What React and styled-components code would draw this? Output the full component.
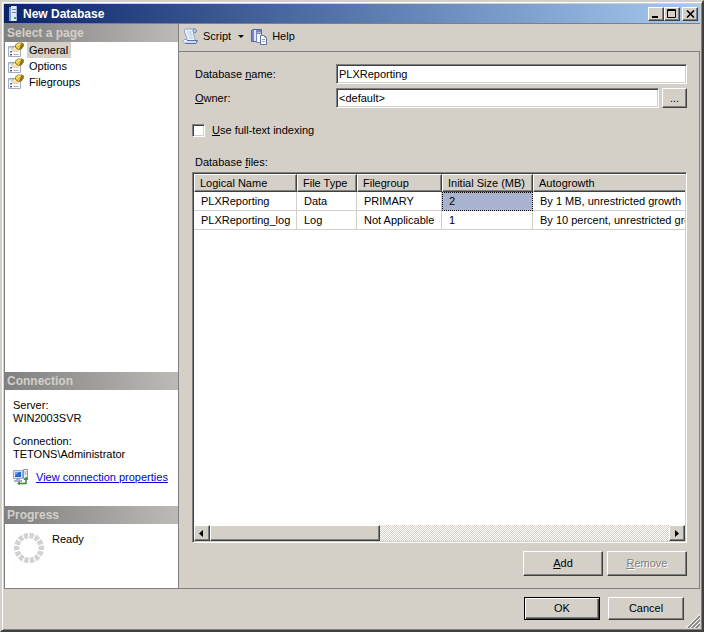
import { useState } from "react";
import styled, { createGlobalStyle } from "styled-components";

const GlobalStyle = createGlobalStyle`
  * {
    box-sizing: border-box;
  }
  body {
    margin: 0;
    background: #d4d0c8;
  }
  body, button, input, table {
    font-family: "Liberation Sans", Arial, sans-serif;
    font-size: 11px;
    line-height: 13px;
    color: #000;
  }
`;

const raised = `
  border: 1px solid;
  border-color: #fff #404040 #404040 #fff;
  box-shadow: inset -1px -1px 0 #808080;
`;

const sunken = `
  border: 1px solid;
  border-color: #808080 #fff #fff #808080;
  box-shadow: inset 1px 1px 0 #404040, inset -1px -1px 0 #d4d0c8;
`;

const Window = styled.div`
  display: flex;
  flex-direction: column;
  min-height: 100vh;
  padding: 2px;
  background: #d4d0c8;
  border: 2px solid;
  border-color: #d4d0c8 #404040 #404040 #d4d0c8;
  box-shadow: inset 1px 1px 0 #fff, inset -1px -1px 0 #808080;
`;

const TitleBar = styled.header`
  display: flex;
  align-items: center;
  height: 19px;
  padding: 0 2px 0 4px;
  background: linear-gradient(to right, #0a246a, #a6caf0);
`;

const Title = styled.h1`
  flex: 1;
  margin: 0 0 0 3px;
  font-size: 12px;
  line-height: 16px;
  color: #fff;
`;

const CaptionButton = styled.button`
  display: flex;
  align-items: center;
  justify-content: center;
  width: 16px;
  height: 14px;
  margin-left: ${(props) => (props.$spaced ? "2px" : "0")};
  padding: 0;
  background: #d4d0c8;
  ${raised}
`;

const Body = styled.div`
  display: flex;
  flex: 1;
  border-top: 1px solid #808080;
`;

const Sidebar = styled.aside`
  display: flex;
  flex-direction: column;
  width: 175px;
  flex-shrink: 0;
  background: #fff;
  border: 1px solid #808080;
  border-top: 0;
`;

const SectionTitle = styled.h2`
  margin: 0;
  padding: 0 2px;
  font-size: 12px;
  line-height: 18px;
  color: #d4d0c8;
  background: linear-gradient(to right, #808080, #bcbab6);
`;

const PageList = styled.ul`
  flex: 1;
  margin: 0;
  padding: 0 3px;
  list-style: none;
`;

const PageItem = styled.li`
  display: flex;
  gap: 3px;
  height: 16px;
`;

const PageButton = styled.button`
  padding: 0 3px 0 2px;
  border: 0;
  line-height: 16px;
  background: ${(props) => (props.$selected ? "#d4d0c8" : "transparent")};
`;

const ConnectionInfo = styled.div`
  padding: 9px 8px 21px;
`;

const Fact = styled.p`
  margin: 0 0 10px;
`;

const LinkRow = styled.div`
  display: flex;
  align-items: center;
  gap: 7px;
  margin-top: -2px;
`;

const PropertiesLink = styled.a`
  color: #0000e0;
  white-space: nowrap;
`;

const ProgressInfo = styled.div`
  display: flex;
  gap: 8px;
  padding: 9px 9px 25px;
`;

const Main = styled.main`
  display: flex;
  flex: 1;
  flex-direction: column;
  min-width: 0;
`;

const Toolbar = styled.div`
  display: flex;
  align-items: center;
  gap: 7px;
  height: 27px;
  padding: 0 3px 2px;
`;

const ToolButton = styled.button`
  display: flex;
  align-items: center;
  gap: 4px;
  padding: 0;
  border: 0;
  background: transparent;
`;

const Panel = styled.section`
  display: flex;
  flex: 1;
  flex-direction: column;
  padding: 12px 12px 12px 13px;
  border: 1px solid #808080;
  border-left: 0;
`;

const Field = styled.div`
  display: flex;
  align-items: center;
  gap: 3px;
  height: 20px;
  margin-bottom: 4px;
`;

const FieldLabel = styled.label`
  width: 141px;
  padding-left: 3px;
  flex-shrink: 0;
`;

const TextBox = styled.input`
  flex: 1;
  min-width: 0;
  height: 20px;
  padding: 0 2px;
  background: #fff;
  border-radius: 0;
  outline: 0;
  ${sunken}
`;

const Button = styled.button`
  width: ${(props) => props.$width}px;
  height: ${(props) => props.$height}px;
  padding: 0;
  background: #d4d0c8;
  ${raised}
  ${(props) =>
    props.$primary &&
    `
    border-color: #000;
    box-shadow: inset 1px 1px 0 #fff, inset -1px -1px 0 #404040, inset -2px -2px 0 #808080;
  `}

  &:disabled {
    color: #808080;
    text-shadow: 1px 1px 0 #fff;
  }
`;

const CheckRow = styled.label`
  display: flex;
  align-items: center;
  gap: 7px;
  height: 16px;
  margin: 10px 0 18px;
`;

const CheckBox = styled.input`
  appearance: none;
  width: 13px;
  height: 13px;
  margin: 0;
  background: #fff;
  ${sunken}

  &:checked {
    background: #fff radial-gradient(#000 3px, transparent 3px);
  }
`;

const GridLabel = styled.h3`
  margin: 0 0 3px;
  padding-left: 3px;
  font-size: 11px;
  font-weight: normal;
`;

const Grid = styled.div`
  display: flex;
  flex: 1;
  flex-direction: column;
  padding: 1px;
  background: #fff;
  ${sunken}
`;

const GridView = styled.div`
  flex: 1;
  overflow: hidden;
`;

const FileTable = styled.table`
  width: 580px;
  min-width: 100%;
  table-layout: fixed;
  border-collapse: separate;
  border-spacing: 0;
`;

const HeadCell = styled.th`
  width: ${(props) => (props.$width ? `${props.$width}px` : "auto")};
  height: 18px;
  padding: 0 0 0 5px;
  font-weight: normal;
  text-align: left;
  white-space: nowrap;
  background: #d4d0c8;
  ${raised}
`;

const Cell = styled.td`
  height: 19px;
  padding: 1px 0 0 7px;
  white-space: nowrap;
  border-right: 1px solid #d4d0c8;
  border-bottom: 1px solid #d4d0c8;
  ${(props) =>
    props.$selected &&
    `
    background: #a9b2ce;
    outline: 1px dotted #000;
    outline-offset: -1px;
  `}
`;

const ScrollBar = styled.div`
  display: flex;
  height: 16px;
  background: repeating-conic-gradient(#fff 0% 25%, #d4d0c8 0% 50%) 0 0 / 2px 2px;
`;

const ScrollTrack = styled.div`
  flex: 1;
`;

const ScrollThumb = styled.div`
  width: 37%;
  height: 16px;
  background: #d4d0c8;
  ${raised}
`;

const ScrollButton = styled.button`
  display: flex;
  align-items: center;
  justify-content: center;
  width: 16px;
  height: 16px;
  padding: 0;
  background: #d4d0c8;
  ${raised}
`;

const ButtonRow = styled.div`
  display: flex;
  justify-content: flex-end;
  gap: 4px;
  padding-top: 8px;
`;

const Footer = styled.footer`
  position: relative;
  display: flex;
  justify-content: flex-end;
  gap: 8px;
  padding: 8px 16px;
`;

const Grip = styled.svg`
  position: absolute;
  right: 0;
  bottom: 0;
`;

const ServerIcon = () => (
  <svg width="12" height="16" viewBox="0 0 12 16">
    <path d="M1 1h3v14H1z" fill="#7f9cd0" />
    <path d="M3 0h6v15H3z" fill="#dfe9f8" />
    <path d="M8 0h1v15H8z" fill="#9db4d8" />
    <path d="M4 3.500h4M4 6.500h4" stroke="#6b88bd" />
    <path d="M6 11h2v2H6z" fill="#3c9f4a" />
  </svg>
);

const PageIcon = () => (
  <svg width="16" height="16" viewBox="0 0 16 16">
    <path d="M.5 4.500h12v10H.5z" fill="#fff" stroke="#a3adbf" />
    <path d="M1 5h6v1.500H1z" fill="#b9c9e6" />
    <path d="M2 9h2v1.500H2zM2 12h2v1.500H2z" fill="#4369a8" />
    <path d="M5.500 12.500h5" stroke="#9aa5b8" />
    <path d="M3.500 7.500L7 4l4 3.500-1.500 2.500L8 8.500 6.500 10z" fill="#f8e6c4" stroke="#b79a70" strokeWidth=".6" />
    <path d="M7 3.500L10 1h4.500L16 3l-2.500 4-3 .5L8 6z" fill="#f2cd34" stroke="#7d6714" strokeWidth=".8" />
    <path d="M13 1.500h2.500V4L13 7l-2 .5z" fill="#8a7420" />
    <path d="M8.500 3.700L10.500 2h2" fill="none" stroke="#fff6b8" />
  </svg>
);

const ScriptIcon = () => (
  <svg width="17" height="17" viewBox="0 0 17 17">
    <path
      d="M3.500 1H12c3 0 3.500 3.500 1 3.500h-1.500c-.5 2.500 2 5 1.500 8L11.500 15H3C.5 15 .5 11.500 3 11.500h2c.5-2.500-2-4.500-2.500-7.500C2.200 2.500 2.500 1 3.500 1z"
      fill="#e9f1fc"
      stroke="#8399c4"
      strokeWidth=".9"
    />
    <path d="M12 1c-1.800.5-1.500 3.500 1 3.500 2.300 0 2.300-3.500-1-3.500z" fill="#b8c9e8" stroke="#5c74a8" strokeWidth=".8" />
    <path d="M5 4h5M5.500 6h4.500M6.500 8h4M7 10h4" stroke="#b9cae6" />
    <path d="M5 12.500h10.500L14 15.500H3.500" fill="#cfdcf2" stroke="#4b6298" strokeWidth=".9" />
  </svg>
);

const HelpIcon = () => (
  <svg width="17" height="16" viewBox="0 0 17 16">
    <path d="M.5 1.500l1-1h9v12H.5z" fill="#7484c4" stroke="#5666a8" />
    <path d="M3 1h2v11H3z" fill="#dfe5f7" />
    <path d="M6 3h4v3H6z" fill="#a9b6e2" />
    <path d="M5.500 4.500h4l2 2v7h-6z" fill="#f5f8ff" stroke="#7788b4" />
    <path d="M9.500 6.500h4l2 2v7h-6z" fill="#fff" stroke="#5f74a6" />
    <path d="M13.500 6.500v2h2M11 10.500h3M11 12.500h3" fill="none" stroke="#8ea2cc" />
  </svg>
);

const ConnectionIcon = () => (
  <svg width="16" height="16" viewBox="0 0 16 16">
    <path d="M.5 1.500h9v8h-9z" fill="#d5def0" stroke="#9aabd0" />
    <path d="M2 3h6v5H2z" fill="#2465d5" />
    <path d="M2 3h4L2 7z" fill="#6aa5f5" />
    <path d="M3 10h4v1h2v2H1v-2h2z" fill="#a3aec8" />
    <path d="M10.500.500h4v9h-4z" fill="#eef2fa" stroke="#8792aa" />
    <path d="M11.500 3h2M11.500 5h2" stroke="#8792aa" />
    <path d="M5 14.500h8V10" fill="none" stroke="#35862f" strokeWidth="1.500" />
    <path d="M7 12v4l-3-1.500zM13 7.500l2.500 3.500h-5z" fill="#3f9435" />
  </svg>
);

const Spinner = () => (
  <svg width="30" height="30" viewBox="0 0 30 30">
    {Array.from({ length: 14 }, (_, i) => (
      <path key={i} d="M12.500 0h5l-.8 5.500h-3.400z" fill="#d2d2d2" transform={`rotate(${(i * 360) / 14 + 12} 15 15)`} />
    ))}
  </svg>
);

const pages = ["General", "Options", "Filegroups"];

const columns = [
  { name: "Logical Name", width: 103 },
  { name: "File Type", width: 60 },
  { name: "Filegroup", width: 85 },
  { name: "Initial Size (MB)", width: 91 },
  { name: "Autogrowth" },
];

const files = [
  ["PLXReporting", "Data", "PRIMARY", "2", "By 1 MB, unrestricted growth"],
  ["PLXReporting_log", "Log", "Not Applicable", "1", "By 10 percent, unrestricted gro"],
];

export default function App() {
  const [page, setPage] = useState("General");
  const [name, setName] = useState("PLXReporting");
  const [owner, setOwner] = useState("<default>");
  const [fullText, setFullText] = useState(false);

  return (
    <>
      <GlobalStyle />
      <Window>
        <TitleBar>
          <ServerIcon />
          <Title>New Database</Title>
          <CaptionButton aria-label="Minimize">
            <svg width="10" height="9" viewBox="0 0 10 9">
              <path d="M1 7h6v2H1z" />
            </svg>
          </CaptionButton>
          <CaptionButton aria-label="Maximize">
            <svg width="10" height="10" viewBox="0 0 10 10">
              <path d="M.5.500h8v8h-8zM0 1.500h9" fill="none" stroke="#000" />
            </svg>
          </CaptionButton>
          <CaptionButton aria-label="Close" $spaced>
            <svg width="9" height="8" viewBox="0 0 9 8">
              <path d="M1 .5l7 7M8 .5l-7 7" stroke="#000" strokeWidth="1.600" />
            </svg>
          </CaptionButton>
        </TitleBar>
        <Body>
          <Sidebar>
            <SectionTitle>Select a page</SectionTitle>
            <PageList>
              {pages.map((item) => (
                <PageItem key={item}>
                  <PageIcon />
                  <PageButton $selected={item === page} onClick={() => setPage(item)}>
                    {item}
                  </PageButton>
                </PageItem>
              ))}
            </PageList>
            <SectionTitle>Connection</SectionTitle>
            <ConnectionInfo>
              <Fact>
                Server:
                <br />
                WIN2003SVR
              </Fact>
              <Fact>
                Connection:
                <br />
                TETONS\Administrator
              </Fact>
              <LinkRow>
                <ConnectionIcon />
                <PropertiesLink href="#">View connection properties</PropertiesLink>
              </LinkRow>
            </ConnectionInfo>
            <SectionTitle>Progress</SectionTitle>
            <ProgressInfo>
              <Spinner />
              <span>Ready</span>
            </ProgressInfo>
          </Sidebar>
          <Main>
            <Toolbar>
              <ToolButton>
                <ScriptIcon />
                Script
                <svg width="9" height="3" viewBox="0 0 9 3">
                  <path d="M3 0h6L6 3z" />
                </svg>
              </ToolButton>
              <ToolButton>
                <HelpIcon />
                Help
              </ToolButton>
            </Toolbar>
            <Panel>
              <Field>
                <FieldLabel htmlFor="name">
                  Database <u>n</u>ame:
                </FieldLabel>
                <TextBox id="name" value={name} onChange={(e) => setName(e.target.value)} />
              </Field>
              <Field>
                <FieldLabel htmlFor="owner">
                  <u>O</u>wner:
                </FieldLabel>
                <TextBox id="owner" value={owner} onChange={(e) => setOwner(e.target.value)} />
                <Button $width={25} $height={20} aria-label="Browse owner">
                  ...
                </Button>
              </Field>
              <CheckRow>
                <CheckBox type="checkbox" checked={fullText} onChange={(e) => setFullText(e.target.checked)} />
                <span>
                  <u>U</u>se full-text indexing
                </span>
              </CheckRow>
              <GridLabel id="files">
                Database <u>f</u>iles:
              </GridLabel>
              <Grid>
                <GridView>
                  <FileTable aria-labelledby="files">
                    <thead>
                      <tr>
                        {columns.map((column) => (
                          <HeadCell key={column.name} $width={column.width}>
                            {column.name}
                          </HeadCell>
                        ))}
                      </tr>
                    </thead>
                    <tbody>
                      {files.map((row, i) => (
                        <tr key={row[0]}>
                          {row.map((value, j) => (
                            <Cell key={j} $selected={i === 0 && j === 3}>
                              {value}
                            </Cell>
                          ))}
                        </tr>
                      ))}
                    </tbody>
                  </FileTable>
                </GridView>
                <ScrollBar>
                  <ScrollButton aria-label="Scroll left">
                    <svg width="6" height="7" viewBox="0 0 6 7">
                      <path d="M4 0v7L0 3.500z" />
                    </svg>
                  </ScrollButton>
                  <ScrollTrack>
                    <ScrollThumb />
                  </ScrollTrack>
                  <ScrollButton aria-label="Scroll right">
                    <svg width="6" height="7" viewBox="0 0 6 7">
                      <path d="M1 0v7l4-3.500z" />
                    </svg>
                  </ScrollButton>
                </ScrollBar>
              </Grid>
              <ButtonRow>
                <Button $width={80} $height={25}>
                  <u>A</u>dd
                </Button>
                <Button $width={80} $height={25} disabled>
                  <u>R</u>emove
                </Button>
              </ButtonRow>
            </Panel>
          </Main>
        </Body>
        <Footer>
          <Button $width={76} $height={23} $primary>
            OK
          </Button>
          <Button $width={76} $height={23}>Cancel</Button>
          <Grip width="14" height="14" viewBox="0 0 14 14">
            <path d="M0 14L14 0M4 14L14 4M8 14l6-6" stroke="#fff" />
            <path d="M2 14L14 2M6 14l8-8M10 14l4-4" stroke="#808080" strokeWidth="1.500" />
          </Grip>
        </Footer>
      </Window>
    </>
  );
}
